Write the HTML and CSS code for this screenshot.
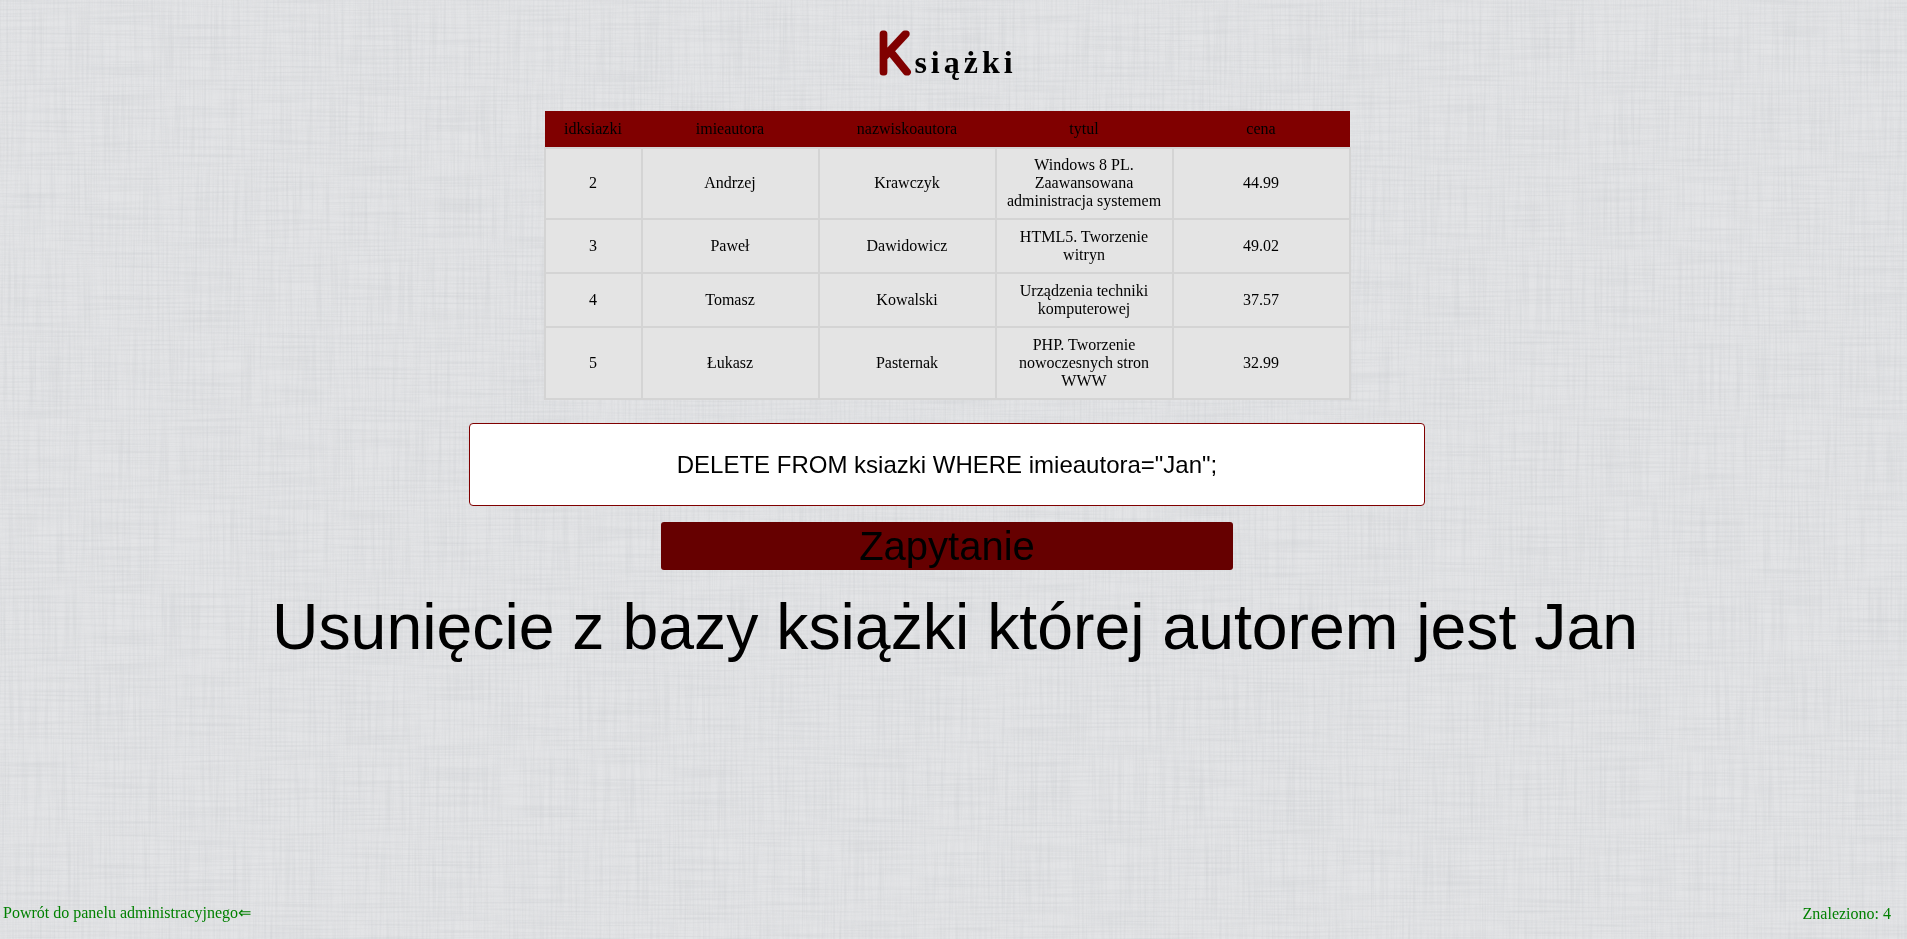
FILE: index.html
```html
<!DOCTYPE html>
<html lang="pl">
<head>
    <meta charset="UTF-8">
    <title>Książki</title>
    <link rel="stylesheet" href="styles.css">
</head>
<body>
    <svg class="linen" width="100%" height="100%" aria-hidden="true">
        <filter id="threads-v" x="0" y="0" width="100%" height="100%">
            <feTurbulence type="fractalNoise" baseFrequency="0.45 0.012" numOctaves="2" seed="4"/>
            <feColorMatrix values="0 0 0 0 0.45  0 0 0 0 0.47  0 0 0 0 0.5  0.4 0 0 0 -0.16"/>
        </filter>
        <filter id="threads-h" x="0" y="0" width="100%" height="100%">
            <feTurbulence type="fractalNoise" baseFrequency="0.012 0.45" numOctaves="2" seed="11"/>
            <feColorMatrix values="0 0 0 0 0.45  0 0 0 0 0.47  0 0 0 0 0.5  0.4 0 0 0 -0.16"/>
        </filter>
        <rect width="100%" height="100%" filter="url(#threads-v)"/>
        <rect width="100%" height="100%" filter="url(#threads-h)"/>
    </svg>
    <main class="content">
        <div class="top">
            <h1 class="title">
                <svg class="title-k" width="37" height="56" viewBox="0 0 37 56"><text x="0" y="48" class="title-k-text" transform="translate(1 0) scale(0.92 1)">K</text></svg>
                <span class="title-rest">siążki</span>
            </h1>
            <table class="books">
                <thead>
                    <tr><th>idksiazki</th><th>imieautora</th><th>nazwiskoautora</th><th>tytul</th><th>cena</th></tr>
                </thead>
                <tbody>
                    <tr><td>2</td><td>Andrzej</td><td>Krawczyk</td><td>Windows 8 PL. Zaawansowana administracja systemem</td><td>44.99</td></tr>
                    <tr><td>3</td><td>Paweł</td><td>Dawidowicz</td><td>HTML5. Tworzenie witryn</td><td>49.02</td></tr>
                    <tr><td>4</td><td>Tomasz</td><td>Kowalski</td><td>Urządzenia techniki komputerowej</td><td>37.57</td></tr>
                    <tr><td>5</td><td>Łukasz</td><td>Pasternak</td><td>PHP. Tworzenie nowoczesnych stron WWW</td><td>32.99</td></tr>
                </tbody>
            </table>
            <form class="query">
                <input class="query-input" type="text" value='DELETE FROM ksiazki WHERE imieautora="Jan";'>
                <input class="query-btn" type="button" value="Zapytanie">
            </form>
        </div>
        <p class="desc">Usunięcie z bazy książki której autorem jest Jan</p>
    </main>
    <footer class="foot">
        <a class="foot-back" href="#">Powrót do panelu administracyjnego⇐</a>
        <span class="foot-count">Znaleziono: 4</span>
    </footer>
</body>
</html>
```

FILE: styles.css
```css
:root {
    --maroon: #800000;
    --dark-maroon: #660000;
    --cell-bg: #e4e4e4;
    --cell-border: #d4d4d4;
}

html, body {
    height: 100%;
}

body {
    margin: 0;
    display: flex;
    flex-direction: column;
    overflow: hidden;
    font-family: "Liberation Serif", serif;
    font-size: 16px;
    color: #000;
    background-color: #e3e4e6;
}

.linen {
    position: fixed;
    top: 0;
    left: 0;
    z-index: -1;
}

.content {
    flex: 1;
    display: flex;
    flex-direction: column;
    align-items: center;
}

.top {
    width: 1894px;
    align-self: flex-start;
    display: flex;
    flex-direction: column;
    align-items: center;
}

.title {
    margin: 0;
    padding-top: 24px;
    height: 111px;
    box-sizing: border-box;
    display: flex;
    align-items: flex-start;
    font-size: 32px;
    letter-spacing: 4px;
}

.title-k {
    display: block;
    overflow: visible;
}

.title-k-text {
    font-family: "Roboto", sans-serif;
    font-size: 54px;
    font-weight: 100;
    letter-spacing: 0;
    fill: var(--maroon);
    stroke: var(--maroon);
    stroke-width: 7px;
    stroke-linejoin: round;
    stroke-linecap: round;
}

.title-rest {
    margin-top: 20px;
}

.books {
    width: 807px;
    table-layout: fixed;
    border-collapse: collapse;
    text-align: center;
}

.books th {
    height: 36px;
    padding: 0;
    font-weight: normal;
    background: var(--maroon);
}

.books th:first-child {
    width: 97px;
}

.books td {
    padding: 8px;
    background: var(--cell-bg);
    border: 2px solid var(--cell-border);
}

.books tbody tr:first-child td {
    padding-top: 7px;
}

.query {
    width: 100%;
    display: flex;
    flex-direction: column;
    align-items: center;
}

.query-input {
    width: 954px;
    height: 81px;
    margin-top: 23px;
    padding: 0;
    border: 1px solid var(--maroon);
    border-radius: 4px;
    background: #fff;
    text-align: center;
    font-family: "Liberation Sans", sans-serif;
    font-size: 24px;
    color: #000;
}

.query-btn {
    width: 572px;
    height: 48px;
    margin-top: 16px;
    padding: 0;
    border: 0;
    border-radius: 3px;
    background: var(--dark-maroon);
    font-family: "Liberation Sans", sans-serif;
    font-size: 40px;
    color: #000;
}

.desc {
    margin: 20px 0 0 3px;
    font-family: "Liberation Sans", sans-serif;
    font-size: 64.35px;
    white-space: nowrap;
}

.foot {
    display: flex;
    justify-content: space-between;
    padding: 0 16px 17px 3px;
    color: #008000;
}

.foot-back {
    color: #008000;
    text-decoration: none;
}

.foot-count {
    position: relative;
    top: 2px;
}
```
